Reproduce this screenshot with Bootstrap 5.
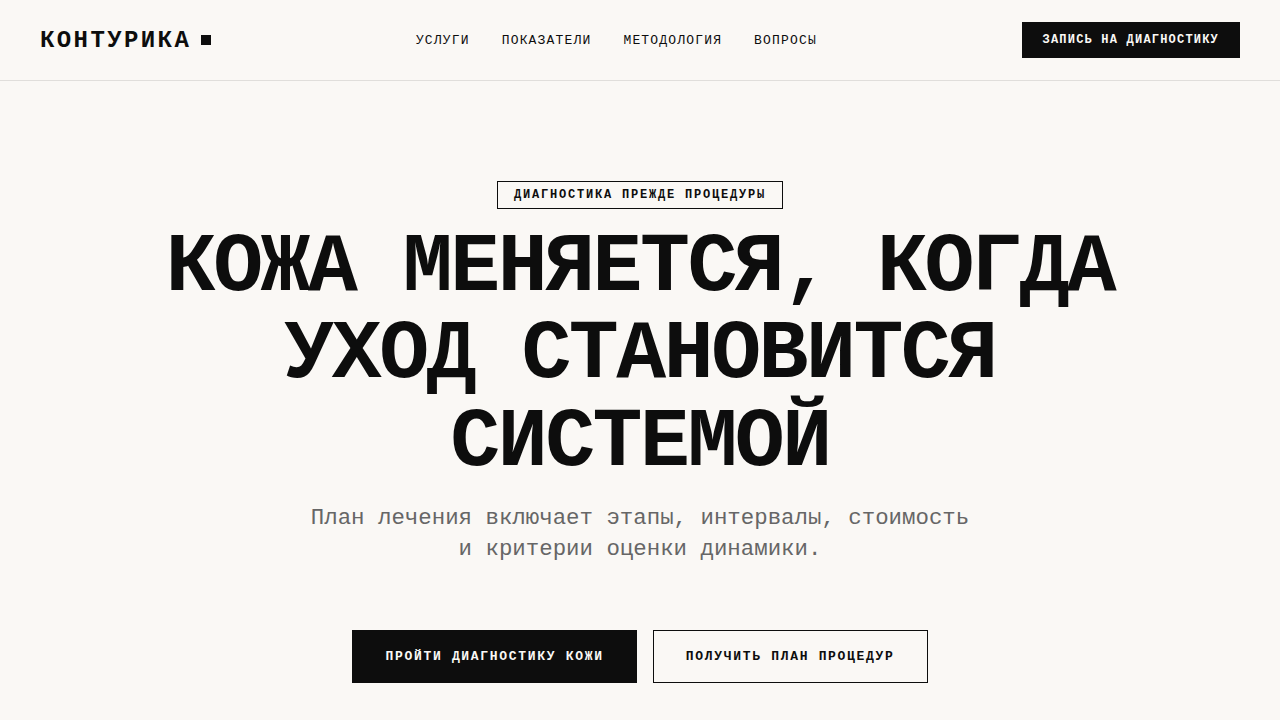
<!DOCTYPE html>
<html lang="ru">
<head>
<meta charset="utf-8">
<meta name="viewport" content="width=device-width, initial-scale=1">
<title>Контурика</title>
<link href="https://cdn.jsdelivr.net/npm/bootstrap@5.3.0/dist/css/bootstrap.min.css" rel="stylesheet">
<style>
  :root { --ink: #0d0d0d; --paper: #faf8f5; --muted-ink: #666; --rule: #e0dedb; }
  body { background: var(--paper); color: var(--ink); font-family: "Liberation Mono", monospace; }
  .site-header { padding: 22px 40px; border-bottom: 1px solid var(--rule); }
  .brand { font-size: 24px; line-height: 27px; letter-spacing: .1em; gap: 10px; padding: 0; margin: 0; }
  .brand, .brand:hover { color: var(--ink); }
  .brand-dot { width: 10px; height: 10px; background: var(--ink); }
  .menu { gap: 32px; }
  .menu .nav-link { padding: 0; font-size: 13px; line-height: 15px; letter-spacing: .09em; color: var(--ink); }
  .btn-ink, .btn-line { border: 1px solid var(--ink); border-radius: 0; font-weight: 700; }
  .btn-ink, .btn-ink:hover { background: var(--ink); color: var(--paper); }
  .btn-line, .btn-line:hover { background: transparent; color: var(--ink); }
  .btn-compact { padding: 10px 20px; font-size: 12px; line-height: 14px; letter-spacing: .1em; }
  .btn-wide { padding: 18px 32px; font-size: 13px; line-height: 15px; letter-spacing: .13em; }
  .hero { padding: 100px 40px 36px; }
  .tagline { border: 1px solid var(--ink); padding: 6px 16px; font-size: 12px; line-height: 14px; letter-spacing: .15em; }
  .headline { max-width: 1100px; margin: 16px 0; font-size: clamp(36px, 6.5vw, 96px); line-height: 1.05; letter-spacing: -.03em; }
  .summary { max-width: 680px; margin: 0 0 64px; font-size: clamp(16px, 1.75vw, 28px); line-height: 1.4; color: var(--muted-ink); }
</style>
</head>
<body>
<header class="site-header d-flex flex-wrap align-items-center justify-content-between gap-3">
  <a class="navbar-brand brand d-flex align-items-center fw-bold text-uppercase" href="#">Контурика<span class="brand-dot"></span></a>
  <nav class="nav menu text-uppercase" aria-label="Основное меню">
    <a class="nav-link" href="#services">Услуги</a>
    <a class="nav-link" href="#metrics">Показатели</a>
    <a class="nav-link" href="#method">Методология</a>
    <a class="nav-link" href="#faq">Вопросы</a>
  </nav>
  <button type="button" class="btn btn-ink btn-compact text-uppercase">Запись на диагностику</button>
</header>
<main class="hero d-flex flex-column align-items-center text-center">
  <div class="tagline fw-bold text-uppercase">Диагностика прежде процедуры</div>
  <h1 class="headline fw-bold text-uppercase">Кожа меняется, когда уход становится системой</h1>
  <p class="summary">План лечения включает этапы, интервалы, стоимость и критерии оценки динамики.</p>
  <div class="d-flex flex-wrap justify-content-center gap-3">
    <button type="button" class="btn btn-ink btn-wide text-uppercase">Пройти диагностику кожи</button>
    <button type="button" class="btn btn-line btn-wide text-uppercase">Получить план процедур</button>
  </div>
</main>
<script src="https://cdn.jsdelivr.net/npm/bootstrap@5.3.0/dist/js/bootstrap.bundle.min.js"></script>
</body>
</html>
